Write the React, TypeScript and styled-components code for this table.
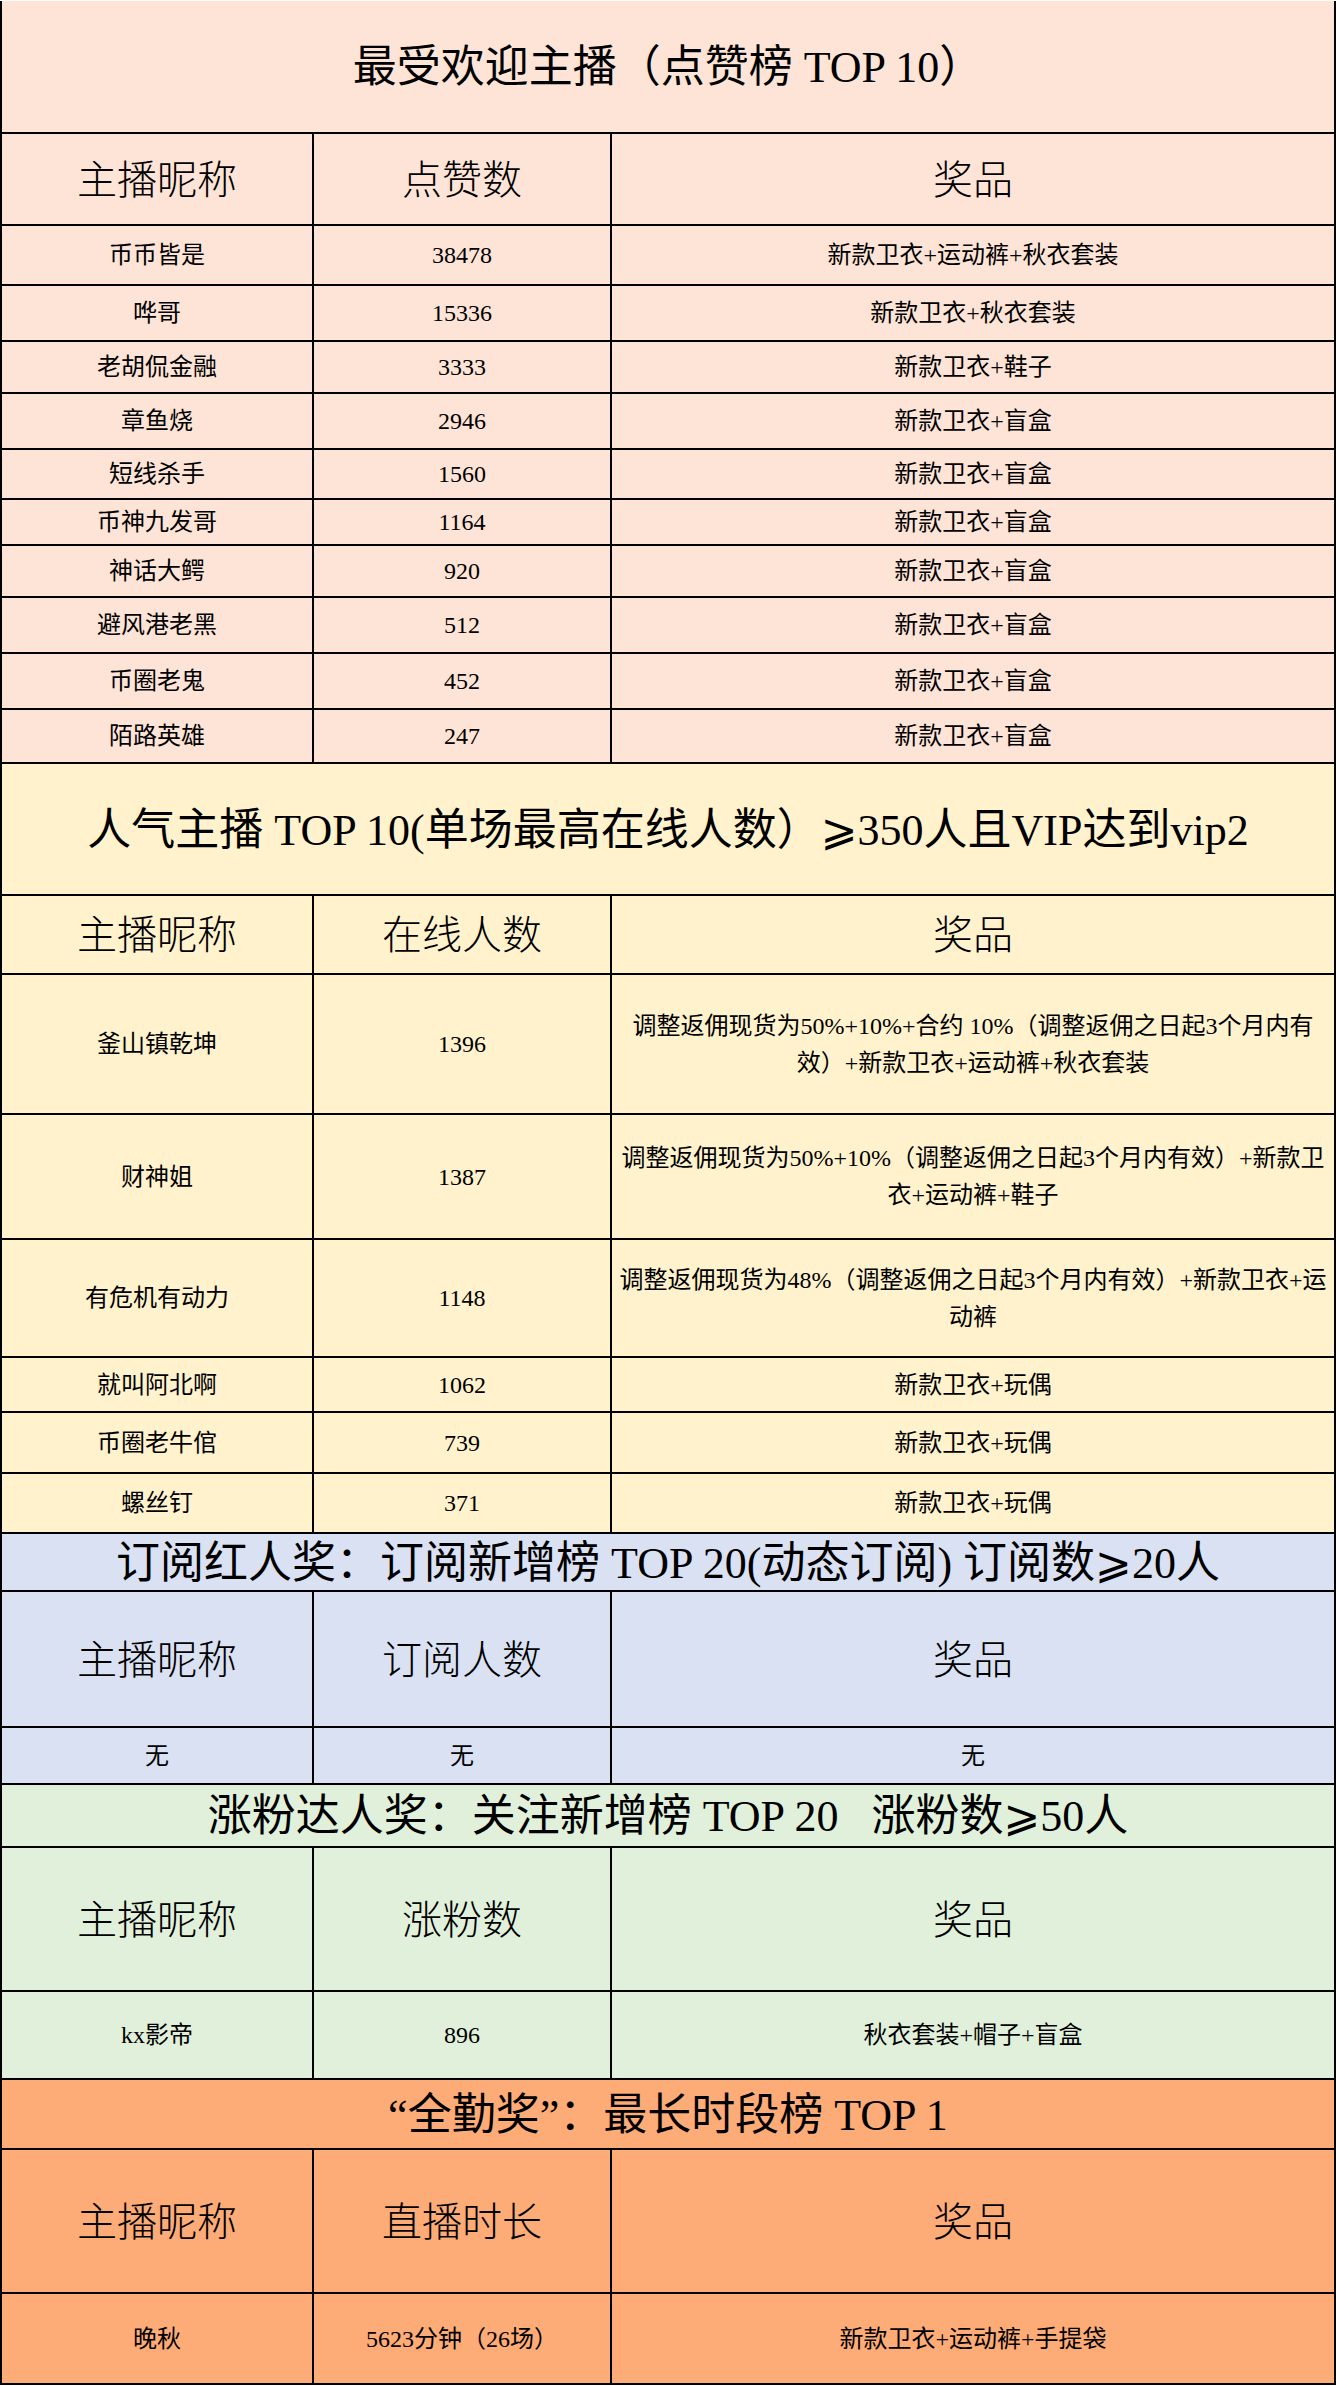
import React from "react";
import styled, { createGlobalStyle } from "styled-components";

const GlobalStyle = createGlobalStyle`
  html, body {
    margin: 0;
    padding: 0;
    background: #ffffff;
  }
  body {
    font-family: "Liberation Serif", "Noto Sans CJK SC", "DejaVu Sans", serif;
    color: #000;
  }
`;

type Row = { h: number; name: string; value: string; prize: string[] };
type Section = {
  bg: string;
  titleH: number;
  title: string;
  headerH: number;
  col2: string;
  rows: Row[];
};

const STD = "新款卫衣+盲盒";
const DOLL = "新款卫衣+玩偶";

const sections: Section[] = [
  {
    bg: "#fde4d6",
    titleH: 133,
    title: "最受欢迎主播（点赞榜 TOP 10）",
    headerH: 92,
    col2: "点赞数",
    rows: [
      { h: 60, name: "币币皆是", value: "38478", prize: ["新款卫衣+运动裤+秋衣套装"] },
      { h: 56, name: "哗哥", value: "15336", prize: ["新款卫衣+秋衣套装"] },
      { h: 52, name: "老胡侃金融", value: "3333", prize: ["新款卫衣+鞋子"] },
      { h: 56, name: "章鱼烧", value: "2946", prize: [STD] },
      { h: 50, name: "短线杀手", value: "1560", prize: [STD] },
      { h: 46, name: "币神九发哥", value: "1164", prize: [STD] },
      { h: 52, name: "神话大鳄", value: "920", prize: [STD] },
      { h: 56, name: "避风港老黑", value: "512", prize: [STD] },
      { h: 56, name: "币圈老鬼", value: "452", prize: [STD] },
      { h: 54, name: "陌路英雄", value: "247", prize: [STD] },
    ],
  },
  {
    bg: "#fff2cc",
    titleH: 132,
    title: "人气主播 TOP 10(单场最高在线人数）⩾350人且VIP达到vip2",
    headerH: 79,
    col2: "在线人数",
    rows: [
      {
        h: 140,
        name: "釜山镇乾坤",
        value: "1396",
        prize: [
          "调整返佣现货为50%+10%+合约 10%（调整返佣之日起3个月内有",
          "效）+新款卫衣+运动裤+秋衣套装",
        ],
      },
      {
        h: 125,
        name: "财神姐",
        value: "1387",
        prize: [
          "调整返佣现货为50%+10%（调整返佣之日起3个月内有效）+新款卫",
          "衣+运动裤+鞋子",
        ],
      },
      {
        h: 118,
        name: "有危机有动力",
        value: "1148",
        prize: [
          "调整返佣现货为48%（调整返佣之日起3个月内有效）+新款卫衣+运",
          "动裤",
        ],
      },
      { h: 55, name: "就叫阿北啊", value: "1062", prize: [DOLL] },
      { h: 61, name: "币圈老牛倌", value: "739", prize: [DOLL] },
      { h: 60, name: "螺丝钉", value: "371", prize: [DOLL] },
    ],
  },
  {
    bg: "#d9e1f3",
    titleH: 58,
    title: "订阅红人奖：订阅新增榜 TOP 20(动态订阅) 订阅数⩾20人",
    headerH: 136,
    col2: "订阅人数",
    rows: [{ h: 57, name: "无", value: "无", prize: ["无"] }],
  },
  {
    bg: "#e0f0da",
    titleH: 63,
    title: "涨粉达人奖：关注新增榜 TOP 20\u00a0\u00a0\u00a0涨粉数⩾50人",
    headerH: 144,
    col2: "涨粉数",
    rows: [{ h: 88, name: "kx影帝", value: "896", prize: ["秋衣套装+帽子+盲盒"] }],
  },
  {
    bg: "#fdab77",
    titleH: 70,
    title: "“全勤奖”：最长时段榜 TOP 1",
    headerH: 144,
    col2: "直播时长",
    rows: [{ h: 91, name: "晚秋", value: "5623分钟（26场）", prize: ["新款卫衣+运动裤+手提袋"] }],
  },
];

const Page = styled.div`
  width: 1336px;
  box-sizing: border-box;
  padding-top: 1px;
  background: #ffffff;
`;

const Board = styled.div`
  width: 1336px;
  box-sizing: border-box;
  border-left: 2px solid #000;
  border-right: 2px solid #000;
`;

const SectionBox = styled.section<{ $bg: string }>`
  background: ${(p) => p.$bg};
`;

const TitleRow = styled.div<{ $h: number }>`
  height: ${(p) => p.$h}px;
  box-sizing: border-box;
  border-bottom: 2px solid #000;
  display: flex;
  align-items: center;
  justify-content: center;
  padding-top: 3px;
  font-size: 44px;
  line-height: 1;
  white-space: nowrap;
`;

const GridRow = styled.div<{ $h: number }>`
  height: ${(p) => p.$h}px;
  box-sizing: border-box;
  border-bottom: 2px solid #000;
  display: grid;
  grid-template-columns: 312px 298px 1fr;
`;

const Cell = styled.div<{ $head?: boolean; $last?: boolean }>`
  box-sizing: border-box;
  border-right: ${(p) => (p.$last ? "none" : "2px solid #000")};
  display: flex;
  flex-direction: column;
  align-items: center;
  justify-content: center;
  text-align: center;
  padding: ${(p) => (p.$head ? "3px 4px 0" : "1px 4px 0")};
  font-size: ${(p) => (p.$head ? "40px" : "24px")};
  font-weight: ${(p) => (p.$head ? 300 : 400)};
  line-height: ${(p) => (p.$head ? "1.2" : "37px")};
  white-space: nowrap;
  overflow: visible;
`;

const Line = styled.span`
  display: block;
`;

export default function App() {
  return (
    <>
      <GlobalStyle />
      <Page>
        <Board>
          {sections.map((s, i) => (
            <SectionBox key={i} $bg={s.bg}>
              <TitleRow $h={s.titleH}>{s.title}</TitleRow>
              <GridRow $h={s.headerH}>
                <Cell $head>主播昵称</Cell>
                <Cell $head>{s.col2}</Cell>
                <Cell $head $last>
                  奖品
                </Cell>
              </GridRow>
              {s.rows.map((r, j) => (
                <GridRow key={j} $h={r.h}>
                  <Cell>{r.name}</Cell>
                  <Cell>{r.value}</Cell>
                  <Cell $last>
                    {r.prize.map((p, k) => (
                      <Line key={k}>{p}</Line>
                    ))}
                  </Cell>
                </GridRow>
              ))}
            </SectionBox>
          ))}
        </Board>
      </Page>
    </>
  );
}
